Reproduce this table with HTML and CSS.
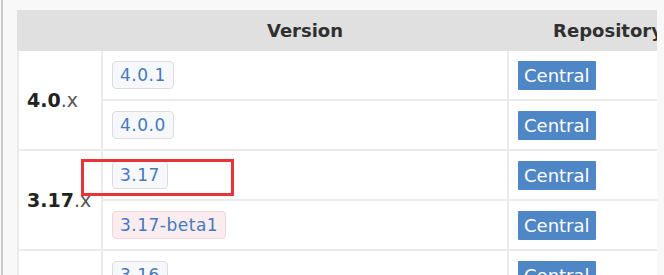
FILE: index.html
```html
<!DOCTYPE html>
<html>
<head>
<meta charset="utf-8">
<link rel="stylesheet" href="styles.css">
</head>
<body>
<div class="page">
  <div class="clip">
    <table class="grid">
      <colgroup>
        <col class="c1"><col class="c2"><col class="c3">
      </colgroup>
      <thead>
        <tr><th></th><th>Version</th><th>Repository</th></tr>
      </thead>
      <tbody>
        <tr>
          <td rowspan="2" class="label"><b>4.0</b>.x</td>
          <td><a class="tag">4.0.1</a></td>
          <td><span class="repo">Central</span></td>
        </tr>
        <tr>
          <td><a class="tag">4.0.0</a></td>
          <td><span class="repo">Central</span></td>
        </tr>
        <tr>
          <td rowspan="2" class="label"><b>3.17</b>.x</td>
          <td><a class="tag">3.17</a></td>
          <td><span class="repo">Central</span></td>
        </tr>
        <tr>
          <td><a class="tag beta">3.17-beta1</a></td>
          <td><span class="repo">Central</span></td>
        </tr>
        <tr>
          <td rowspan="2" class="label"></td>
          <td><a class="tag">3.16</a></td>
          <td><span class="repo">Central</span></td>
        </tr>
      </tbody>
    </table>
  </div>
  <div class="mark"></div>
</div>
</body>
</html>
```

FILE: styles.css
```css
html, body {
  margin: 0;
  padding: 0;
  background: #f8f8f8;
  font-family: "DejaVu Sans", Verdana, sans-serif;
}
.page {
  position: relative;
  height: 275px;
  overflow: hidden;
  border-left: 2px solid #c9c9c9;
  margin-left: 1px;
  padding: 10px 0 0 14px;
  box-sizing: border-box;
}
.clip {
  width: 640px;
  overflow: hidden;
}
.grid {
  border-collapse: collapse;
  width: 690px;
  table-layout: fixed;
  background: #fff;
}
.c1 { width: 84px; }
.c2 { width: 406px; }
.c3 { width: 200px; }
.grid th {
  background: #e0e0e0;
  height: 39px;
  padding: 0;
  font-size: 18px;
  font-weight: bold;
  color: #303030;
  text-align: center;
  border: 2px solid #e0e0e0;
  box-sizing: border-box;
}
.grid td {
  height: 50px;
  padding: 0 0 0 9px;
  box-sizing: border-box;
  border: 2px solid #ebebeb;
  vertical-align: middle;
}
.grid td.label {
  font-size: 19px;
  color: #555;
  padding-left: 8px;
}
.label b { color: #222; }
.tag {
  display: inline-block;
  height: 28px;
  line-height: 26px;
  box-sizing: border-box;
  padding: 0 7px;
  border: 1px solid #dcdcdc;
  border-radius: 4px;
  background: #f7f8fc;
  color: #4579c0;
  font-size: 17px;
  letter-spacing: 0.5px;
}
.tag.beta {
  background: #fbecef;
  border-color: #efd6db;
}
.repo {
  display: inline-block;
  height: 29px;
  line-height: 29px;
  padding: 0 6px;
  background: #4f86c6;
  color: #fff;
  font-size: 18px;
  border-radius: 1px;
}
.mark {
  position: absolute;
  left: 78px;
  top: 159px;
  width: 153px;
  height: 37px;
  box-sizing: border-box;
  border: 3px solid #ea3336;
}
```
